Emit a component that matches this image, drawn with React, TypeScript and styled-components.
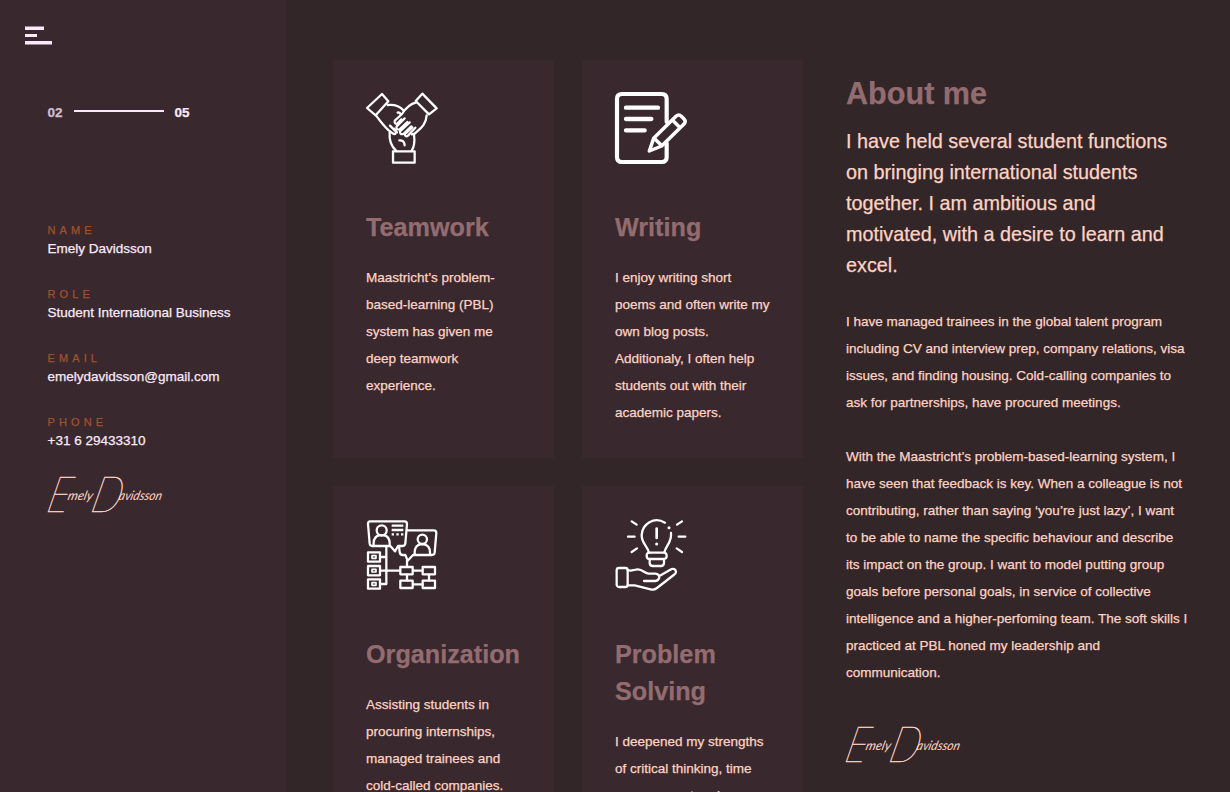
import React from "react";
import styled, { createGlobalStyle } from "styled-components";

const GlobalStyle = createGlobalStyle`
  * { box-sizing: border-box; }
  html, body { margin: 0; padding: 0; height: 100%; overflow: hidden; }
  body {
    background: #322629;
    font-family: "Liberation Sans", Arial, sans-serif;
    -webkit-font-smoothing: antialiased;
    -webkit-text-stroke: 0.25px currentColor;
  }
  h1, h2, p, dl, dt, dd { margin: 0; }
`;

const Page = styled.div`
  display: flex;
  width: 1230px;
  height: 792px;
  overflow: hidden;
`;

const Sidebar = styled.aside`
  flex: none;
  width: 286px;
  padding: 27px 0 0 25px;
  background: #39292e;
  color: #fbe9fb;
`;

const MenuButton = styled.button`
  display: flex;
  flex-direction: column;
  gap: 4px;
  height: 18px;
  padding: 0;
  border: 0;
  background: none;
`;

const MenuBar = styled.span<{ $width: number; $edge: number }>`
  display: block;
  flex: none;
  width: ${(p) => p.$width}px;
  height: 3px;
  background: #fbe9fb;
  box-shadow: 0 ${(p) => p.$edge}px 0 rgba(251, 233, 251, 0.5);
`;

const Progress = styled.div`
  display: flex;
  align-items: center;
  margin: 59px 0 0 22.5px;
  height: 17px;
  font-size: 13.5px;
  font-weight: 700;
`;

const Current = styled.span`
  width: 26.5px;
  color: #d2bdd4;
`;

const Track = styled.span`
  width: 90px;
  height: 2px;
  margin: 0 10.5px 3px 0;
  background: #fbe9fb;
`;

const Details = styled.dl`
  display: flex;
  flex-direction: column;
  gap: 28px;
  margin: 101px 0 0 22.5px;
`;

const Label = styled.dt`
  height: 17px;
  font-size: 11px;
  line-height: 17px;
  letter-spacing: 4.1px;
  color: #a0522d;
`;

const Value = styled.dd`
  height: 19px;
  font-size: 13.5px;
  line-height: 19px;
  white-space: nowrap;
`;

const Main = styled.main`
  display: flex;
  align-items: flex-start;
  padding: 60px 0 0 47px;
`;

const Cards = styled.section`
  display: grid;
  grid-template-columns: 221px 221px;
  grid-template-rows: 398.4px auto;
  gap: 28px;
`;

const Card = styled.article`
  padding: 32px 0 32px 33px;
  background: #39292e;
`;

const Icon = styled.svg`
  display: block;
  width: 72px;
  height: 72px;
  overflow: visible;
  fill: none;
  stroke: #fff;
  stroke-width: 6.8;
  stroke-linecap: round;
  stroke-linejoin: round;
`;

const CardTitle = styled.h2`
  margin-top: 45.2px;
  font-size: 25.2px;
  line-height: 37px;
  color: #946c70;
  white-space: pre;
`;

const CardText = styled.p`
  margin-top: 18px;
  font-size: 13.5px;
  line-height: 27px;
  color: #ffd3c4;
  white-space: pre;
`;

const About = styled.section`
  margin: 11px 0 0 43px;
  color: #ffd3c4;
`;

const AboutTitle = styled.h1`
  font-size: 30.6px;
  line-height: 45px;
  color: #946c70;
`;

const Lead = styled.p`
  margin-top: 10px;
  font-size: 19.8px;
  line-height: 31px;
  white-space: pre;
`;

const Body = styled.p`
  margin-top: 27px;
  font-size: 13.5px;
  line-height: 27px;
  white-space: pre;
`;

const SignatureMark = styled.svg`
  display: block;
  width: 118px;
  height: 42px;
  overflow: visible;
  fill: #ffd3c4;
  font-family: Lato, "Liberation Serif", serif;
  font-style: italic;
`;

const Capital = styled.text`
  font-size: 50px;
  font-weight: 100;
  stroke: #ffd3c4;
  stroke-width: 0.5px;
`;

const Lowercase = styled.text`
  font-size: 13px;
  font-weight: 400;
`;

const SidebarSignature = styled.div`
  margin: 24px 0 0 20px;
`;

const AboutSignature = styled.div`
  margin: 38px 0 0 -3px;
`;

const Signature = () => (
  <SignatureMark viewBox="0 0 118 42">
    <g transform="translate(9.5 0) skewX(-14)">
      <Capital x="0" y="38" textLength="22" lengthAdjust="spacingAndGlyphs">E</Capital>
      <Lowercase x="19" y="26" textLength="25" lengthAdjust="spacingAndGlyphs">mely</Lowercase>
      <Capital x="44" y="38" textLength="30" lengthAdjust="spacingAndGlyphs">D</Capital>
      <Lowercase x="70" y="26" textLength="43" lengthAdjust="spacingAndGlyphs">avidsson</Lowercase>
    </g>
  </SignatureMark>
);

const TeamworkIcon = () => (
  <Icon viewBox="33 36 216 216">
    <path d="M81 42 L100 64 L62 106 L36 84 Z" />
    <path d="M202 41 L245 85 L222 103 L182 63 Z" />
    <path d="M98 75 C116 73 132 76 145 91" />
    <path d="M63 106 C73 120 86 137 101 151 L116 162 Q124 164 122 154 L105 137" />
    <path d="M118 146 L126 157" />
    <path d="M184 67 C164 72 150 87 141 102 L120 121 Q116 130 126 132 L139 118" />
    <path d="M149 115 L125 139 Q122 149 133 149 L157 126" />
    <path d="M164 127 L135 154 Q134 165 145 162 L169 139" />
    <path d="M172 142 L149 163 Q151 173 160 166 L181 143" />
    <path d="M215 106 C213 137 192 148 179 161 L170 163" />
    <path d="M128 98 Q134 96 137 103" />
    <path d="M104 157 C102 181 107 197 123 212 M177 164 C180 187 179 199 170 212" />
    <path d="M133 181 Q148 180 149 196" />
    <path d="M114 214 H179 V248 H114 Z" />
  </Icon>
);

const WeightedStroke = styled.path<{ $weight: number }>`
  stroke-width: ${(p) => p.$weight};
`;

const TextRules = styled.path`
  stroke-linecap: butt;
`;

const Dot = styled.circle`
  fill: #fff;
  stroke: none;
`;

const WritingIcon = () => (
  <Icon viewBox="30 36 216 216">
    <WeightedStroke $weight={12.5} d="M185 126 V57 Q185 42 170 42 H51 Q36 42 36 57 V231 Q36 246 51 246 H170 Q185 246 185 231 V190" />
    <WeightedStroke $weight={13} d="M63 83 H159 M63 117 H139 M63 151 H119" />
    <WeightedStroke $weight={10.5} d="M133 213 L146 175 L213 109 Q221 101 229 109 L237 117 Q244 124 237 132 L170 198 Z M149 176 L169 196 M203 121 L223 141" />
  </Icon>
);

const OrganizationIcon = () => (
  <Icon viewBox="33 30 216 216">
    <path d="M45 40 H149 Q156 40 156 48 L151 106 Q150 114 142 114 H129 L120 130 L106 114 H51 Q45 114 44 107 L39 48 Q39 40 45 40 Z" />
    <path d="M56 112 V104 Q57 86 72 82 H88 Q103 86 104 104 V112" />
    <circle cx="80" cy="67" r="15" />
    <TextRules d="M110 53 H145 M110 66 H145 M110 79 H117 M124 79 H131 M138 79 H145" />
    <path d="M156 67 H237 Q244 67 244 75 L239 134 Q238 141 231 141 H174 L158 158 L151 141 H143 Q135 141 134 132 L132 115" />
    <path d="M179 140 V132 Q180 112 196 109 H207 Q224 112 225 132 V140" />
    <circle cx="202" cy="94" r="14" />
    <path d="M94 115 V228 M77 147 H94 M77 188 H135 M77 228 H94 M156 157 V176 M174 188 H202 M156 200 V217 M222 200 V217 M174 229 H202" />
    <path d="M39 133 H75 V161 H39 Z M39 174 H75 V202 H39 Z M39 214 H75 V242 H39 Z" />
    <WeightedStroke $weight={5} d="M51 143 H63 V151 H51 Z M51 184 H63 V192 H51 Z M51 224 H63 V232 H51 Z" />
    <path d="M136 177 H173 V199 H136 Z M203 177 H240 V199 H203 Z M136 218 H173 V240 H136 Z M203 218 H240 V240 H203 Z" />
  </Icon>
);

const IdeaIcon = () => (
  <Icon viewBox="30 30 216 216">
    <path d="M180 44 C147 24 112 48 110 81 C109 106 128 114 132 134 H178 C181 114 201 104 198 75" />
    <Dot cx="192" cy="59" r="4.6" />
    <WeightedStroke $weight={8} d="M155 62 V90" />
    <Dot cx="155" cy="108" r="4.6" />
    <path d="M132 134 Q125 135 125 143 Q125 153 134 153 H176 Q185 153 185 144 Q185 135 178 134 M134 154 V165 Q135 174 143 174 H168 Q176 174 177 165 V154" />
    <path d="M80 40 L95 50 M69 86 H89 M80 132 L96 121 M231 40 L216 50 M221 86 H241 M231 132 L215 121" />
    <rect x="35" y="180" width="33" height="57" rx="7" />
    <path d="M68 186 C81 191 86 184 99 184 C113 184 120 197 131 197 H151 Q163 199 163 208 Q161 218 151 219 H117 M163 204 L200 183 Q211 180 213 191 Q213 196 206 201 L156 240 Q147 247 137 244 L89 232 H68" />
  </Icon>
);

const details = [
  ["NAME", "Emely Davidsson"],
  ["ROLE", "Student International Business"],
  ["EMAIL", "emelydavidsson@gmail.com"],
  ["PHONE", "+31 6 29433310"],
];

const cards = [
  {
    icon: <TeamworkIcon />,
    title: "Teamwork",
    text: "Maastricht’s problem-\nbased-learning (PBL)\nsystem has given me\ndeep teamwork\nexperience.",
  },
  {
    icon: <WritingIcon />,
    title: "Writing",
    text: "I enjoy writing short\npoems and often write my\nown blog posts.\nAdditionaly, I often help\nstudents out with their\nacademic papers.",
  },
  {
    icon: <OrganizationIcon />,
    title: "Organization",
    text: "Assisting students in\nprocuring internships,\nmanaged trainees and\ncold-called companies.",
  },
  {
    icon: <IdeaIcon />,
    title: "Problem\nSolving",
    text: "I deepened my strengths\nof critical thinking, time\nmanagement and",
  },
];

const lead =
  "I have held several student functions\non bringing international students\ntogether. I am ambitious and\nmotivated, with a desire to learn and\nexcel.";

const paragraphs = [
  "I have managed trainees in the global talent program\nincluding CV and interview prep, company relations, visa\nissues, and finding housing. Cold-calling companies to\nask for partnerships, have procured meetings.",
  "With the Maastricht’s problem-based-learning system, I\nhave seen that feedback is key. When a colleague is not\ncontributing, rather than saying ‘you’re just lazy’, I want\nto be able to name the specific behaviour and describe\nits impact on the group. I want to model putting group\ngoals before personal goals, in service of collective\nintelligence and a higher-perfoming team. The soft skills I\npracticed at PBL honed my leadership and\ncommunication.",
];

export default function App() {
  return (
    <>
      <GlobalStyle />
      <Page>
        <Sidebar>
          <MenuButton aria-label="Menu">
            <MenuBar $width={19} $edge={-1} />
            <MenuBar $width={12} $edge={0} />
            <MenuBar $width={27} $edge={1} />
          </MenuButton>
          <Progress>
            <Current>02</Current>
            <Track />
            <span>05</span>
          </Progress>
          <Details>
            {details.map(([label, value]) => (
              <div key={label}>
                <Label>{label}</Label>
                <Value>{value}</Value>
              </div>
            ))}
          </Details>
          <SidebarSignature>
            <Signature />
          </SidebarSignature>
        </Sidebar>
        <Main>
          <Cards>
            {cards.map((card) => (
              <Card key={card.title}>
                {card.icon}
                <CardTitle>{card.title}</CardTitle>
                <CardText>{card.text}</CardText>
              </Card>
            ))}
          </Cards>
          <About>
            <AboutTitle>About me</AboutTitle>
            <Lead>{lead}</Lead>
            {paragraphs.map((text) => (
              <Body key={text}>{text}</Body>
            ))}
            <AboutSignature>
              <Signature />
            </AboutSignature>
          </About>
        </Main>
      </Page>
    </>
  );
}
